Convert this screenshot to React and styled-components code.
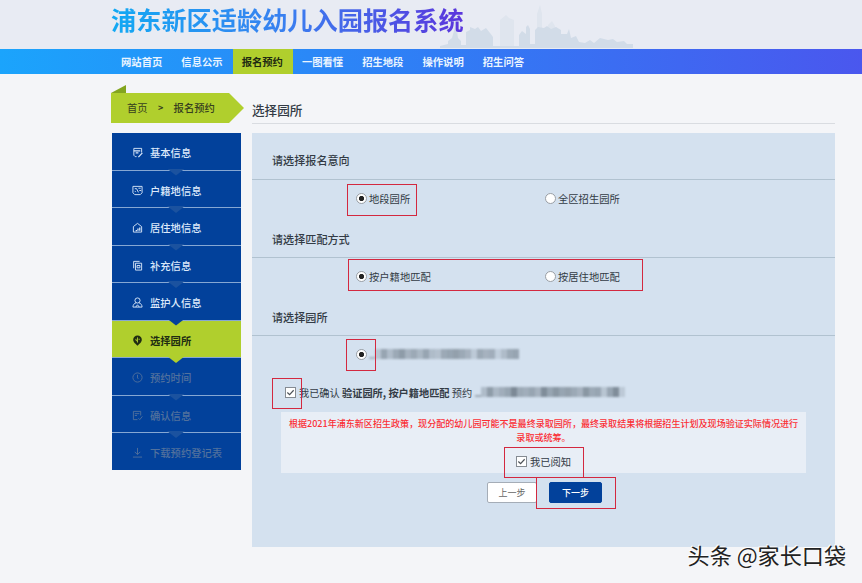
import React, { useState } from "react";
import styled, { createGlobalStyle, css } from "styled-components";

const navItems = [
  "网站首页",
  "信息公示",
  "报名预约",
  "一图看懂",
  "招生地段",
  "操作说明",
  "招生问答",
];

const steps = [
  { label: "基本信息", icon: "edit" },
  { label: "户籍地信息", icon: "card" },
  { label: "居住地信息", icon: "house" },
  { label: "补充信息", icon: "copy" },
  { label: "监护人信息", icon: "user" },
  { label: "选择园所", icon: "pin" },
  { label: "预约时间", icon: "clock", disabled: true },
  { label: "确认信息", icon: "check", disabled: true },
  { label: "下载预约登记表", icon: "download", disabled: true },
];

const icons = {
  edit: (
    <>
      <path d="M5 10.5H3.5L2 9V1.5h8.5V6" />
      <path d="M2 4.2h7M4 6.5h3M11.3 6.5L7 11" strokeWidth="1.3" />
    </>
  ),
  card: (
    <>
      <path d="M1 1.5h10v7L9 10.5H3l-2-2z" />
      <path d="M3 4h2l2 4M7 3.5h2.5M8 6h2M3 6.5l1 1" />
    </>
  ),
  house: (
    <>
      <path d="M1.5 11V5L6 1.5 10.5 5v6z" />
      <path d="M4 9.5h1.5M6.5 9.5V7M8.5 9.5V6" strokeWidth="1.4" />
    </>
  ),
  copy: (
    <>
      <path d="M3.8 3.5h6.7V11H3.8z" />
      <path d="M1.8 9V1.5h6.5M5.5 6h3.2v2.5H5.5z" />
    </>
  ),
  user: (
    <>
      <circle cx="6" cy="3.8" r="2.8" />
      <path d="M4.5 6.3C2.2 7 1.2 8.5 1 11h10c-.2-2.5-1.2-4-3.5-4.7M4 11l2-2.5L8 11" />
    </>
  ),
  pin: (
    <>
      <path
        d="M6 .5a4.6 4.6 0 0 0-4.7 4.6C1.3 8 4.5 9.8 6 11.8c1.5-2 4.7-3.8 4.7-6.7A4.6 4.6 0 0 0 6 .5z"
        fill="currentColor"
        stroke="none"
      />
      <path d="M6 2.6v5.6M4.3 4.2v1.6l1.7 1M7.8 4v1.5" stroke="#b0cf2d" />
    </>
  ),
  clock: (
    <>
      <circle cx="6" cy="6" r="5" />
      <path d="M6 3v3.5l1 1" />
    </>
  ),
  check: (
    <>
      <path d="M6 10.5H1.5v-9h8V6M3 4h5M3 6h2.5" />
      <path d="M7 9l1.5 1.5L11.3 7" />
    </>
  ),
  download: <path d="M6 1v7M3 5.3l3 3 3-3M1 11h10" />,
};

const StepIcon = ({ name }) => (
  <Icon viewBox="0 0 12 12" aria-hidden="true">
    {icons[name]}
  </Icon>
);

const Skyline = () => (
  <City viewBox="0 0 210 48" aria-hidden="true">
    <g fill="#dfe5ee">
      <path d="M14 48V18l2-14 2 14v30zM60 48V20l6-5 3 3 5 2v28zM97 48V14l3-9 2 9v34zM108 48V25l4-4 3 5v22z" />
    </g>
    <path
      fill="#d2dce8"
      d="M0 46l8-2v-3l4-3 3-11 3 11 3 3v4h5V32l4-2v-3l5 2 3-2 3 4 5-3 4 5 3 4v9h26V35l3-4 4 3v-7l2-2 2 4v15h5V30l3-3 6 1 3-2 4 3 5-2 5 3v4h6l2-5 2 9 5-2 3 6 6 1 5-3 4 3 6-5 8 2 5-1 4 3 7-1 3 3 6 0v5H0z"
    />
  </City>
);

const purposeOptions = ["地段园所", "全区招生园所"];
const matchOptions = ["按户籍地匹配", "按居住地匹配"];

const schoolShades = [
  0.5, 0.3, 0.65, 0.4, 0.6, 0.75, 0.5, 0.6, 0.45, 0.65, 0.4, 0.35, 0.6, 0.65,
  0.7, 0.6, 0.5, 0.25, 0.6, 0.5, 0.55, 0.2, 0.4, 0.6, 0.65,
];
const confirmShades = [
  0.6, 0.4, 0.75, 0.45, 0.55, 0.65, 0.95, 0.6, 0.55, 0.65, 0.5, 0.9, 0.65,
  0.8, 0.65, 0.7, 0.6, 0.5, 0.8, 0.6, 0.65, 0.3, 0.65, 0.9, 0.25,
];

const Masked = ({ shades }) => (
  <Mosaic>
    {shades.map((shade, i) => (
      <Tile key={i} style={{ opacity: shade }} />
    ))}
  </Mosaic>
);

const RadioRow = ({ options, value, onChange }) => (
  <Options>
    {options.map((option) => (
      <Option key={option} onClick={() => onChange(option)}>
        <Radio $checked={option === value} />
        {option}
      </Option>
    ))}
  </Options>
);

const Checkbox = ({ checked, onClick }) => (
  <Box onClick={onClick}>
    {checked && (
      <svg viewBox="0 0 10 10">
        <path d="M1.5 5l2.5 2.5 4.5-5" />
      </svg>
    )}
  </Box>
);

const App = () => {
  const [purpose, setPurpose] = useState("地段园所");
  const [match, setMatch] = useState("按户籍地匹配");
  const [confirmed, setConfirmed] = useState(true);
  const [read, setRead] = useState(true);

  return (
    <Page>
      <GlobalStyle />
      <Header>
        <Title>浦东新区适龄幼儿入园报名系统</Title>
        <Skyline />
      </Header>
      <Nav>
        {navItems.map((item) => (
          <NavItem key={item} $active={item === "报名预约"}>
            {item}
          </NavItem>
        ))}
      </Nav>
      <Content>
        <Aside>
          <Breadcrumb>
            <Fold />
            <Ribbon>
              <span>首页</span>
              <Chevron>&gt;</Chevron>
              <strong>报名预约</strong>
            </Ribbon>
          </Breadcrumb>
          <Steps>
            {steps.map((step) => (
              <Step
                key={step.label}
                $active={step.label === "选择园所"}
                $disabled={step.disabled}
              >
                <StepIcon name={step.icon} />
                {step.label}
              </Step>
            ))}
          </Steps>
        </Aside>
        <Main>
          <PageTitle>选择园所</PageTitle>
          <Panel>
            <SectionTitle>请选择报名意向</SectionTitle>
            <RadioRow
              options={purposeOptions}
              value={purpose}
              onChange={setPurpose}
            />
            <SectionTitle>请选择匹配方式</SectionTitle>
            <RadioRow
              options={matchOptions}
              value={match}
              onChange={setMatch}
            />
            <SectionTitle>请选择园所</SectionTitle>
            <Options $short>
              <Option $wide>
                <Radio $checked />
                <Masked shades={schoolShades} />
              </Option>
            </Options>
            <Confirm>
              <Checkbox
                checked={confirmed}
                onClick={() => setConfirmed(!confirmed)}
              />
              <span>
                我已确认 <b>验证园所, 按户籍地匹配</b> 预约
              </span>
              <Masked shades={confirmShades} />
            </Confirm>
            <Notice>
              <Warning>
                根据2021年浦东新区招生政策，现分配的幼儿园可能不是最终录取园所，最终录取结果将根据招生计划及现场验证实际情况进行
                <br />
                录取或统筹。
              </Warning>
              <ReadLine>
                <Checkbox checked={read} onClick={() => setRead(!read)} />
                我已阅知
              </ReadLine>
            </Notice>
            <Buttons>
              <Button>上一步</Button>
              <Button $primary>下一步</Button>
            </Buttons>
            <Mark $x={95} $y={51} $w={70} $h={32} />
            <Mark $x={96} $y={126} $w={295} $h={32} />
            <Mark $x={94} $y={206} $w={30} $h={32} />
            <Mark $x={20} $y={245} $w={30} $h={31} />
            <Mark $x={252} $y={314} $w={80} $h={31} />
            <Mark $x={284} $y={344} $w={80} $h={32} />
          </Panel>
        </Main>
      </Content>
      <Watermark>头条 @家长口袋</Watermark>
    </Page>
  );
};

const GlobalStyle = createGlobalStyle`
  * {
    box-sizing: border-box;
  }
  body {
    margin: 0;
    background: #f4f5f8;
    font-family: "Noto Sans CJK SC", sans-serif;
    color: #333b45;
  }
`;

const Page = styled.div`
  position: relative;
  width: 862px;
  height: 583px;
  overflow: hidden;
`;

const Header = styled.header`
  display: flex;
  align-items: flex-start;
  height: 49px;
  padding-left: 111px;
  background: #e8ebf3;
  position: relative;
`;

const Title = styled.h1`
  margin: 0;
  font-size: 25.2px;
  line-height: 38px;
  font-weight: 700;
  white-space: nowrap;
  color: transparent;
  background: linear-gradient(90deg, #12a9f3, #3a7ff0 50%, #5b35dc);
  background-clip: text;
  position: relative;
  z-index: 1;
`;

const City = styled.svg`
  position: absolute;
  left: 440px;
  bottom: 1px;
  width: 210px;
  height: 48px;
  filter: blur(0.6px);
`;

const Nav = styled.nav`
  display: flex;
  height: 25px;
  padding-left: 112px;
  background: linear-gradient(90deg, #1ba4fc, #307df5 50%, #4a57ee);
`;

const NavItem = styled.a`
  width: 60.3px;
  padding-right: 1px;
  line-height: 26px;
  text-align: center;
  font-size: 10.3px;
  font-weight: 700;
  color: ${(p) => (p.$active ? "#1d2a12" : "#e9f4ff")};
  background: ${(p) => (p.$active ? "#b0cf2d" : "transparent")};
`;

const Content = styled.div`
  display: flex;
  gap: 8px;
  padding: 11px 27px 0 111px;
`;

const Aside = styled.aside`
  width: 133px;
  flex-shrink: 0;
`;

const Breadcrumb = styled.div`
  height: 48px;
`;

const Fold = styled.div`
  width: 15px;
  height: 8px;
  background: #83a51f;
  clip-path: polygon(100% 0, 100% 100%, 0 100%);
`;

const Ribbon = styled.div`
  display: flex;
  align-items: center;
  height: 30px;
  padding: 0 0 2px 16px;
  font-size: 10.3px;
  color: #37401f;
  background: #b0cf2d;
  clip-path: polygon(0 0, 118px 0, 100% 50%, 118px 100%, 0 100%);
  strong {
    font-weight: 500;
  }
`;

const Chevron = styled.span`
  width: 26px;
  text-align: center;
  font-size: 9px;
  font-weight: 700;
`;

const Steps = styled.ul`
  list-style: none;
  margin: 0 0 0 1px;
  padding: 0;
  width: 129px;
`;

const Step = styled.li`
  display: flex;
  align-items: center;
  gap: 7px;
  height: 37.5px;
  padding: 3px 0 0 20px;
  position: relative;
  font-size: 10.3px;
  font-weight: 500;
  color: #dce9fa;
  background: #02419b;
  &:last-child {
    height: 36.5px;
  }
  &:not(:last-child) {
    border-bottom: 1px solid #86a7d3;
  }
  /* small notch pointing to the next step */
  &:not(:last-child)::after {
    content: "";
    position: absolute;
    z-index: 1;
    left: 55px;
    bottom: -6px;
    width: 18px;
    height: 7px;
    background: #1b529f;
    clip-path: polygon(0 0, 100% 0, 50% 100%);
  }
  &:nth-child(5)::after {
    background: #02419b;
  }
  ${(p) =>
    p.$disabled &&
    css`
      color: #52719d;
    `}
  ${(p) =>
    p.$active &&
    css`
      color: #202c12;
      font-weight: 700;
      background: #b0cf2d;
      &&::after {
        background: #b0cf2d;
      }
    `}
`;

const Icon = styled.svg`
  width: 11px;
  height: 11px;
  fill: none;
  stroke: currentColor;
  stroke-width: 1;
`;

const Main = styled.main`
  flex: 1;
`;

const PageTitle = styled.h2`
  margin: 0 0 9px;
  height: 39px;
  padding-top: 15px;
  font-size: 12.6px;
  line-height: 19px;
  font-weight: 500;
  border-bottom: 1px solid #d9dce1;
`;

const Panel = styled.section`
  position: relative;
  height: 414px;
  background: #d4e1ef;
`;

const SectionTitle = styled.h3`
  margin: 0;
  height: 27px;
  padding: 0 20px;
  font-size: 11.1px;
  line-height: 16px;
  font-weight: 500;
  border-bottom: 1px solid #b1c2d0;
  &:first-child {
    height: 47px;
    padding-top: 19px;
  }
`;

const Options = styled.div`
  display: flex;
  height: ${(p) => (p.$short ? "48px" : "51px")};
  padding: 10px 0 0 104px;
`;

const Option = styled.label`
  display: flex;
  align-items: center;
  gap: 2px;
  width: ${(p) => (p.$wide ? "auto" : "189px")};
  height: 16px;
  font-size: 10.3px;
`;

const Radio = styled.span`
  width: 11px;
  height: 11px;
  border: 1px solid #9a9fa5;
  border-radius: 50%;
  background: ${(p) =>
    p.$checked
      ? "radial-gradient(circle, #222 0 2.2px, #fff 3px)"
      : "#fff"};
`;

const Mosaic = styled.span`
  display: inline-flex;
  align-items: center;
  filter: blur(0.8px);
`;

const Tile = styled.span`
  width: 6px;
  height: 10px;
  background: #778490;
  &:first-child {
    height: 2px;
    align-self: flex-end;
  }
`;

const Confirm = styled.div`
  display: flex;
  align-items: center;
  height: 16px;
  padding-left: 33px;
  gap: 3px;
  font-size: 10.2px;
  b {
    font-weight: 700;
  }
`;

const Box = styled.span`
  display: inline-flex;
  width: 11px;
  height: 11px;
  border: 1px solid #858b92;
  background: #fff;
  svg {
    width: 9px;
    height: 9px;
    fill: none;
    stroke: #4c5157;
    stroke-width: 1.3;
  }
`;

const Notice = styled.div`
  width: 525px;
  height: 61px;
  margin: 12px 0 0 29px;
  padding-top: 5px;
  background: #e8eef6;
`;

const Warning = styled.p`
  margin: 0;
  text-align: center;
  white-space: nowrap;
  font-size: 9.05px;
  line-height: 13.5px;
  font-weight: 500;
  color: #fb2f35;
`;

const ReadLine = styled.label`
  display: flex;
  justify-content: center;
  align-items: center;
  gap: 3px;
  margin-top: 9px;
  height: 16px;
  font-size: 10.3px;
`;

const Buttons = styled.div`
  display: flex;
  gap: 12px;
  padding: 9px 0 0 235px;
`;

const Button = styled.button`
  width: ${(p) => (p.$primary ? "53px" : "50px")};
  height: 21px;
  padding: 0;
  font-family: inherit;
  font-size: 9px;
  border-radius: 2px;
  border: 1px solid ${(p) => (p.$primary ? "#02419b" : "#a5adb7")};
  color: ${(p) => (p.$primary ? "#fff" : "#666")};
  background: ${(p) => (p.$primary ? "#02419b" : "#fff")};
  font-weight: ${(p) => (p.$primary ? 500 : 400)};
`;

const Mark = styled.span`
  position: absolute;
  left: ${(p) => p.$x}px;
  top: ${(p) => p.$y}px;
  width: ${(p) => p.$w}px;
  height: ${(p) => p.$h}px;
  border: 1px solid #d3283f;
  pointer-events: none;
`;

const Watermark = styled.div`
  position: absolute;
  right: 16px;
  bottom: 13px;
  font-size: 22.1px;
  line-height: 32px;
  white-space: nowrap;
  color: #222;
  text-shadow: -1px -1px 0 #fff;
`;

export default App;
